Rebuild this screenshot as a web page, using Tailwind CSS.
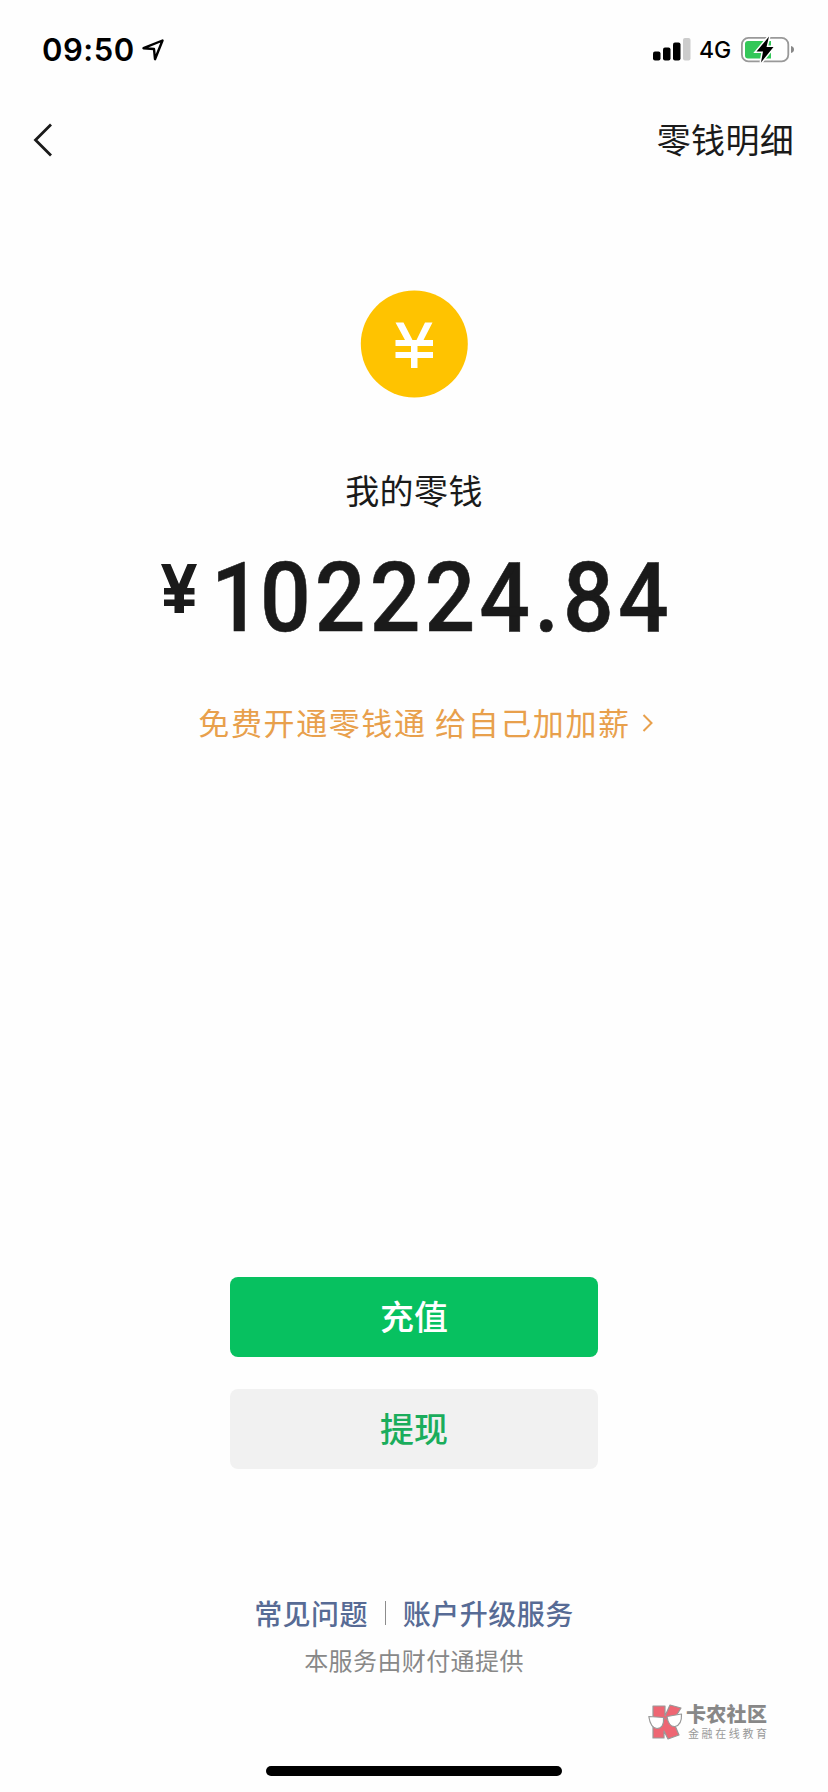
<!DOCTYPE html>
<html lang="zh-CN">
<head>
<meta charset="utf-8">
<title>零钱</title>
<script src="https://cdn.jsdelivr.net/npm/@tailwindcss/browser@4"></script>
</head>
<body class="bg-white">
<div class="relative flex h-[1792px] w-[828px] flex-col bg-[#fefefe] font-['Noto_Sans_CJK_SC',sans-serif] text-[#1a1a1a]">
  <header class="flex h-[100px] shrink-0 items-center justify-between pl-[42px] pr-[34px] text-black">
    <div class="flex items-center gap-[8px]">
      <span class="w-[92px] whitespace-nowrap font-['Inter',sans-serif] text-[31px] leading-[36px] font-semibold tracking-[.5px]">09:50</span>
      <svg class="h-[22px] w-[22px]" viewBox="0 0 22 22" fill="none" stroke="black" stroke-width="2.4" stroke-linejoin="round"><path d="M1.500 9.200 20.500 1.500 13 20.200 12 10Z"/></svg>
    </div>
    <div class="flex items-center">
      <svg class="h-[24px] w-[38px]" viewBox="0 0 38 24"><rect x="0" y="13.500" width="7.500" height="9" rx="2"/><rect x="10" y="9.500" width="7.500" height="13" rx="2"/><rect x="20" y="4.500" width="7.500" height="18" rx="2"/><rect x="30" y="0" width="7.500" height="22.500" rx="2" fill="#ccc"/></svg>
      <span class="ml-[8px] w-[33px] font-['Inter',sans-serif] text-[23px] leading-[28px] font-medium">4G</span>
      <svg class="ml-[9px] h-[28px] w-[53px]" viewBox="0 0 53 28"><rect x=".9" y="1.900" width="46.400" height="23.400" rx="6.500" fill="white" stroke="#999" stroke-width="1.800"/><path d="M50 10Q53 10.700 53 13.500T50 17Z" fill="#888"/><path d="M7 5H30V22.500H7Q4 22.500 4 19.500V8Q4 5 7 5Z" fill="#34c759"/><path d="M28 .5 15.500 15.500H22L20 26.500 32.500 11H25.500Z" fill="black" stroke="white" stroke-width="3" paint-order="stroke"/></svg>
    </div>
  </header>

  <nav class="flex h-[80px] shrink-0 items-center justify-between pl-[32px] pr-[34px]">
    <svg class="h-[36px] w-[21px]" viewBox="0 0 21 36" fill="none" stroke="#1a1a1a" stroke-width="2.800"><path d="M19 2.500 3.500 18 19 33.500"/></svg>
    <span class="mb-[2px] text-[34px] leading-[50px] tracking-[.3px]">零钱明细</span>
  </nav>

  <main class="flex flex-col items-center">
    <svg class="mt-[110px] h-[108px] w-[108px]" viewBox="0 0 108 108"><circle cx="54.300" cy="54" r="53.500" fill="#ffc300"/><path d="M35.500 32.500H43.500L52.500 50H56.500L65 32.500H72.500L63.500 50H73V56H57.500V62H73V68H57.500V78H51V68H35.500V62H51V56H35.500V50H45Z" fill="white"/></svg>
    <p class="mt-[67px] text-[34px] leading-[50px] tracking-[.4px]">我的零钱</p>
    <div class="mt-[43px] flex h-[143px] w-[510px] items-start whitespace-nowrap">
      <svg class="mt-[6px] ml-[2px] h-[49px] w-[36px] shrink-0" viewBox="0 0 36 49" fill="#1a1a1a"><path d="M0 0H9.500L18 20 26.500 0H36L26 24H33.500V30.500H23V35.500H33.500V42H23V49H13.500V42H3V35.500H13.500V30.500H3V24H10Z"/></svg>
      <span class="ml-[14px] origin-left scale-x-[.93] font-['Roboto',sans-serif] text-[96px] leading-[80px] font-medium tracking-[4.400px] [-webkit-text-stroke:.6px_#1a1a1a]"><span class="tracking-[-1.900px]">1</span>02224.84</span>
    </div>
    <div class="flex h-[44px] items-center text-[#e8a04c]">
      <span class="mb-[2px] ml-[23px] text-[31px] leading-[44px] tracking-[1.600px]">免费开通零钱通 给自己加加薪</span>
      <svg class="ml-[11px] h-[18px] w-[11px]" viewBox="0 0 11 18" fill="none" stroke="currentColor" stroke-width="2"><path d="M1.500 1 9.500 9 1.500 17"/></svg>
    </div>
    <button class="mt-[532px] h-[80px] w-[368px] rounded-[8px] bg-[#07c160] pb-[3px] text-[34px] font-medium text-white">充值</button>
    <button class="mt-[32px] h-[80px] w-[368px] rounded-[8px] bg-[#f1f1f1] pb-[3px] text-[34px] font-medium text-[#1aad5c]">提现</button>
    <div class="mt-[124px] flex h-[40px] items-center text-[28px] leading-[40px] font-medium text-[#576b95]">
      <a class="tracking-[.4px]">常见问题</a><span class="mx-[17px] h-[24px] w-px bg-[#8c8c8c]"></span><a class="tracking-[.5px]">账户升级服务</a>
    </div>
    <p class="mt-[9px] text-[24px] leading-[36px] tracking-[.4px] text-[#888]">本服务由财付通提供</p>
  </main>

  <div class="absolute top-[1702px] left-[648px] flex">
    <svg class="h-[40px] w-[35px]" viewBox="0 0 35 40" stroke="#999" stroke-width="1.200" stroke-linejoin="round"><path d="M5 4H17V14L22 3 33 6 25 19 31 33 20 37 16 29V36H5Z" fill="#ee6673"/><path d="M.8 14.500 15.500 15.500Q16.500 26 9 26.500 2.500 26 .8 14.500ZM19 14.500 33.500 12Q34 23 27 24.500 20.500 25 19 14.500ZM15.500 17 19 16.500" fill="white"/></svg>
    <div class="ml-[3px] whitespace-nowrap">
      <p class="text-[20px] leading-[24px] font-black tracking-[.3px] text-[#888]">卡农社区</p>
      <p class="ml-[2px] text-[11px] leading-[14px] tracking-[2.600px] text-[#999]">金融在线教育</p>
    </div>
  </div>
  <div class="absolute top-[1766px] left-[266px] h-[10px] w-[296px] rounded-full bg-black"></div>
</div>
</body>
</html>
